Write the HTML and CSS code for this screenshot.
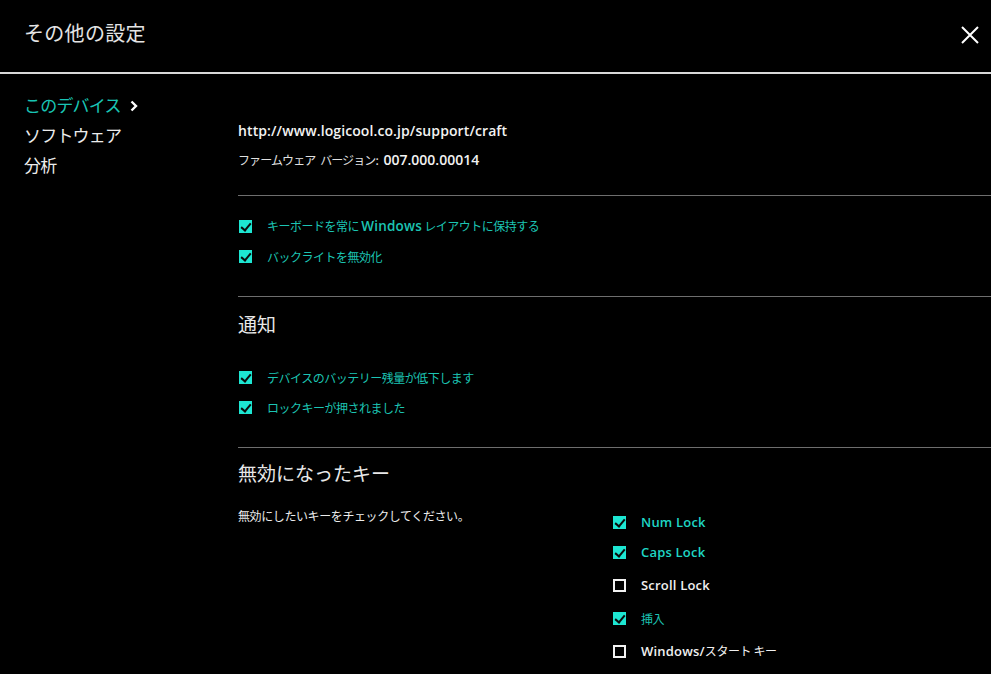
FILE: index.html
```html
<!DOCTYPE html>
<html lang="ja">
<head>
<meta charset="utf-8">
<title>その他の設定</title>
<link rel="stylesheet" href="styles.css">
</head>
<body>
<header class="header">
  <h1 class="title">その他の設定</h1>
  <button class="close" aria-label="閉じる">
    <svg width="18" height="18" viewBox="0 0 18 18"><path d="M1 1 L17 17 M17 1 L1 17" stroke="#fff" stroke-width="2" fill="none"/></svg>
  </button>
</header>
<main class="main">
  <nav class="nav">
    <div class="nav-item active">このデバイス
      <svg class="chev" width="8" height="12" viewBox="0 0 8 12"><path d="M1.5 1.5 L6 6 L1.5 10.5" stroke="#fff" stroke-width="2.4" fill="none"/></svg>
    </div>
    <div class="nav-item">ソフトウェア</div>
    <div class="nav-item">分析</div>
  </nav>
  <section class="content">
    <div class="info">
      <div class="url">http://www.logicool.co.jp/support/craft</div>
      <div class="fw"><span class="fw-label">ファームウェア バージョン:</span> <b>007.000.00014</b></div>
    </div>
    <div class="group first">
      <label class="row checked"><span class="box"></span><span class="lbl">キーボードを常に <b>Windows</b> レイアウトに保持する</span></label>
      <label class="row checked"><span class="box"></span><span class="lbl">バックライトを無効化</span></label>
    </div>
    <div class="group">
      <h2 class="heading">通知</h2>
      <div class="rows">
        <label class="row checked"><span class="box"></span><span class="lbl">デバイスのバッテリー残量が低下します</span></label>
        <label class="row checked"><span class="box"></span><span class="lbl">ロックキーが押されました</span></label>
      </div>
    </div>
    <div class="group last">
      <h2 class="heading">無効になったキー</h2>
      <div class="keys">
        <p class="hint">無効にしたいキーをチェックしてください。</p>
        <div class="keylist">
          <label class="row key checked"><span class="box"></span><span class="lbl b">Num Lock</span></label>
          <label class="row key checked"><span class="box"></span><span class="lbl b">Caps Lock</span></label>
          <label class="row key tall"><span class="box"></span><span class="lbl b">Scroll Lock</span></label>
          <label class="row key tall checked"><span class="box"></span><span class="lbl">挿入</span></label>
          <label class="row key tall"><span class="box"></span><span class="lbl b">Windows/<span class="jp">スタート キー</span></span></label>
        </div>
      </div>
    </div>
  </section>
</main>
</body>
</html>
```

FILE: styles.css
```css
* { box-sizing: border-box; }
html, body { margin: 0; padding: 0; background: #000; height: 100%; overflow: hidden; }
body {
  font-family: "Open Sans", "Noto Sans CJK JP", sans-serif;
  color: #e8e8e8;
}
.header {
  height: 74px;
  border-bottom: 2px solid #d8d8d8;
  display: flex;
  align-items: flex-start;
  justify-content: space-between;
  padding: 0 12px 0 24px;
}
.title {
  margin: 19px 0 0;
  font-family: "Noto Sans CJK JP", sans-serif;
  font-weight: 400;
  font-size: 20px;
  line-height: 28px;
  color: #e4e4e4;
  letter-spacing: 0.3px;
}
.close {
  margin-top: 26px;
  background: none;
  border: 0;
  padding: 0;
  width: 18px;
  height: 18px;
  display: block;
}
.close svg { display: block; }
.main { display: flex; }
.nav {
  width: 238px;
  flex: none;
  padding: 16px 0 0 24px;
}
.nav-item {
  font-family: "Noto Sans CJK JP", sans-serif;
  font-size: 17px;
  line-height: 30px;
  color: #ececec;
  letter-spacing: -0.8px;
  display: flex;
  align-items: center;
}
.nav-item.active { color: #19c4b4; }
.chev { margin-left: 9px; margin-top: 2px; }
.content { flex: 1; }
.info {
  padding: 47px 0 25px;
  border-bottom: 1px solid #6e6e6e;
}
.url {
  font-weight: 600;
  font-size: 14px;
  line-height: 20px;
  color: #f2f2f2;
  letter-spacing: 0.1px;
}
.fw {
  margin-top: 9px;
  font-size: 14px;
  line-height: 20px;
  color: #f2f2f2;
}
.fw-label {
  font-family: "Noto Sans CJK JP", sans-serif;
  font-size: 12px;
  letter-spacing: -0.9px;
  word-spacing: 3px;
  color: #e0e0e0;
}
.fw b { font-weight: 600; margin-left: 2px; }
.group {
  border-bottom: 1px solid #6e6e6e;
  padding: 12px 0 25px;
}
.group.first { padding-top: 15px; }
.group.last { border-bottom: 0; padding-top: 10px; }
.heading {
  margin: 0;
  font-family: "Noto Sans CJK JP", sans-serif;
  font-weight: 400;
  font-size: 19px;
  line-height: 30px;
  color: #e8e8e8;
  letter-spacing: 0;
}
.rows { margin-top: 23px; }
.row {
  display: flex;
  align-items: center;
  height: 30px;
  padding-left: 1px;
}
.box {
  width: 13px;
  height: 13px;
  flex: none;
  border: 2px solid #f2f2f2;
  margin-right: 15px;
  position: relative;
}
.row.checked .box {
  border: 0;
  background: #1de6d2;
}
.row.checked .box::after {
  content: "";
  position: absolute;
  left: 4px;
  top: 1px;
  width: 4px;
  height: 8px;
  border-right: 2px solid #0a0a0a;
  border-bottom: 2px solid #0a0a0a;
  transform: rotate(40deg);
}
.lbl {
  font-family: "Noto Sans CJK JP", sans-serif;
  font-size: 12px;
  color: #f0f0f0;
  letter-spacing: -0.5px;
}
.row.checked .lbl { color: #1cc4b3; }
.lbl b {
  font-family: "Open Sans", sans-serif;
  font-weight: 600;
  font-size: 13.5px;
  letter-spacing: 0.2px;
}
.lbl.b {
  font-family: "Open Sans", "Noto Sans CJK JP", sans-serif;
  font-weight: 600;
  font-size: 13px;
  letter-spacing: 0.2px;
}
.row.checked .lbl.b { color: #1fd6c4; }
.jp { font-family: "Noto Sans CJK JP", sans-serif; font-weight: 400; font-size: 12px; letter-spacing: -0.4px; }
.keys {
  display: flex;
  margin-top: 18px;
}
.hint {
  width: 375px;
  margin: 0;
  font-family: "Noto Sans CJK JP", sans-serif;
  font-size: 12px;
  line-height: 20px;
  color: #ececec;
  letter-spacing: -0.4px;
}
.keylist { padding-top: 1px; }
.row.key { padding-left: 0; }
.row.key.tall { height: 33px; padding-top: 3px; }
```
